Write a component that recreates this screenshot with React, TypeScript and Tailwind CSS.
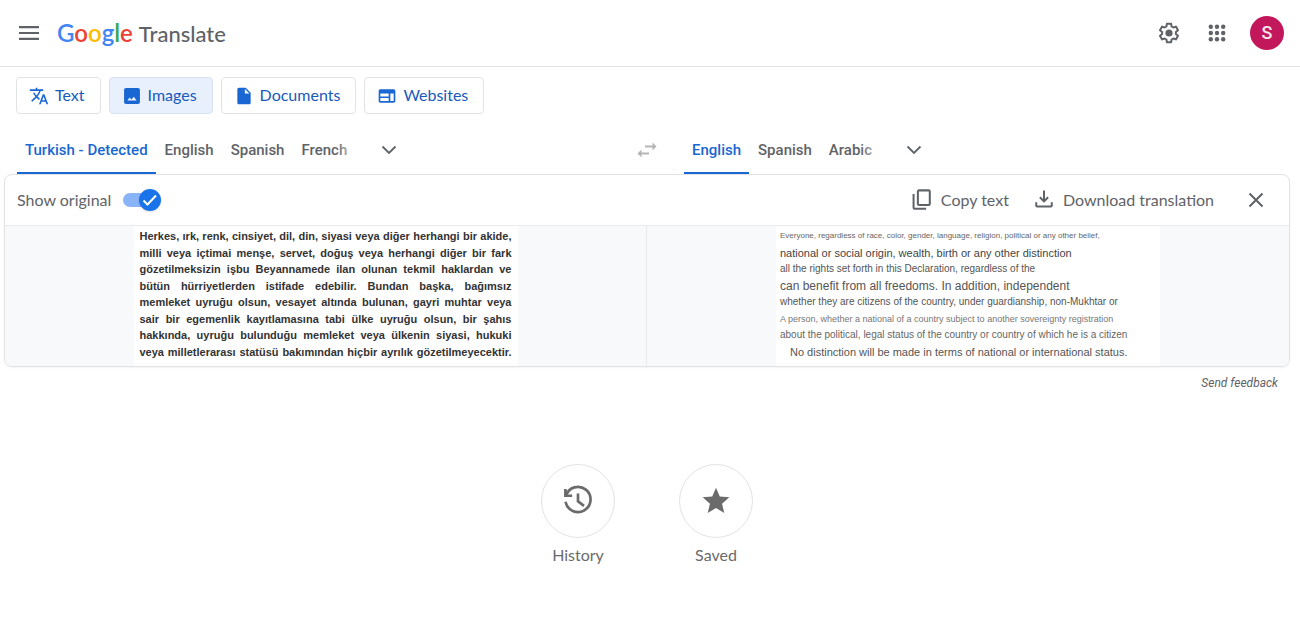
import React, { useState } from "react";

type IconProps = { className?: string };

const MenuIcon = () => (
  <svg className="h-6 w-6" viewBox="0 0 24 24" fill="currentColor" aria-hidden="true">
    <path d="M2 5h20v2.200H2zM2 10.900h20v2.200H2zM2 16.800h20V19H2z" />
  </svg>
);

const TranslateIcon = ({ className }: IconProps) => (
  <svg className={className} viewBox="0 0 24 24" fill="currentColor" aria-hidden="true">
    <path d="M12.870 15.070l-2.540-2.510.030-.030c1.740-1.940 2.980-4.170 3.710-6.530H17V4h-7V2H8v2H1v1.990h11.170C11.500 7.920 10.440 9.750 9 11.350 8.070 10.320 7.300 9.190 6.690 8h-2c.730 1.630 1.730 3.170 2.980 4.560l-5.090 5.020L4 19l5-5 3.110 3.110.760-2.040zM18.500 10h-2L12 22h2l1.120-3h4.750L21 22h2l-4.500-12zm-2.620 7l1.620-4.330L19.120 17h-3.240z" />
  </svg>
);

const ImageIcon = ({ className }: IconProps) => (
  <svg className={className} viewBox="0 0 24 24" fill="currentColor" aria-hidden="true">
    <path d="M19 2.500H5c-1.400 0-2.500.9-2.500 2v15c0 1.100 1.100 2 2.500 2h14c1.400 0 2.500-.9 2.500-2v-15c0-1.100-1.100-2-2.500-2zM17.500 17.500h-11l2.600-3.700 2.100 2.300 3-3.300 3.300 4.700z" />
  </svg>
);

const FileIcon = ({ className }: IconProps) => (
  <svg className={className} viewBox="0 0 24 24" fill="currentColor" aria-hidden="true">
    <path d="M6 2c-1.100 0-2 .9-2 2v16c0 1.100.9 2 2 2h12c1.100 0 2-.9 2-2V8l-6-6H6zm7 7V3.500L18.500 9H13z" />
  </svg>
);

const WebIcon = ({ className }: IconProps) => (
  <svg className={className} viewBox="0 0 24 24" fill="currentColor" aria-hidden="true">
    <path d="M20 4H4c-1.100 0-2 .9-2 2v12c0 1.100.9 2 2 2h16c1.100 0 2-.9 2-2V6c0-1.100-.9-2-2-2zm-6 14H4v-3.500h10V18zm0-5.500H4V9h10v3.500zm6 5.500h-4V9h4v9z" />
  </svg>
);

const GearIcon = () => (
  <svg className="h-6 w-6" viewBox="0 0 24 24" aria-hidden="true">
    <path
      d="M9.900 2.800h4.200l.5 2.700 1.700 1 2.600-.9 2.100 3.600-2.100 1.800v2l2.100 1.800-2.100 3.600-2.600-.9-1.700 1-.5 2.700H9.900l-.5-2.700-1.700-1-2.600.9L3 14.800 5.100 13v-2L3 9.200l2.100-3.600 2.600.9 1.700-1z"
      fill="none"
      stroke="currentColor"
      strokeWidth="2"
      strokeLinejoin="round"
    />
    <circle cx="12" cy="12" r="3.600" fill="currentColor" />
  </svg>
);

const AppsIcon = () => (
  <svg className="h-6 w-6" viewBox="0 0 24 24" fill="currentColor" aria-hidden="true">
    {[5.8, 12, 18.2].map((y) =>
      [5.8, 12, 18.2].map((x) => <circle key={`${x}-${y}`} cx={x} cy={y} r="2.200" />)
    )}
  </svg>
);

const ChevronIcon = () => (
  <svg className="h-6 w-6" viewBox="0 0 24 24" fill="none" stroke="currentColor" strokeWidth="1.800" aria-hidden="true">
    <path d="M5.500 8.500l6.500 6.500 6.500-6.500" />
  </svg>
);

const SwapIcon = () => (
  <svg className="h-6 w-6" viewBox="0 0 24 24" fill="currentColor" aria-hidden="true">
    <path d="M21.500 8.500l-4-4v3H10v2h7.500v3zM2.500 15.500l4-4v3H14v2H6.500v3z" />
  </svg>
);

const CopyIcon = () => (
  <svg className="h-[22px] w-[22px]" viewBox="0 0 24 24" fill="none" stroke="currentColor" strokeWidth="2.200" aria-hidden="true">
    <rect x="7.500" y="1.500" width="13" height="16" rx="1.200" />
    <path d="M2.800 5.500V20.500a1 1 0 0 0 1 1H16.500" />
  </svg>
);

const DownloadIcon = () => (
  <svg className="h-[22px] w-[22px]" viewBox="0 0 24 24" fill="none" stroke="currentColor" strokeWidth="2.200" aria-hidden="true">
    <path d="M12 1.500v12M7.500 9l4.500 4.500L16.500 9M3.500 14.500V18a1 1 0 0 0 1 1h15a1 1 0 0 0 1-1v-3.500" />
  </svg>
);

const CloseIcon = () => (
  <svg className="h-6 w-6" viewBox="0 0 24 24" fill="none" stroke="currentColor" strokeWidth="2" aria-hidden="true">
    <path d="M5.500 5.500l13 13M18.500 5.500l-13 13" />
  </svg>
);

const HistoryIcon = () => (
  <svg className="h-9 w-9" viewBox="0 0 24 24" fill="none" stroke="currentColor" strokeWidth="1.800" aria-hidden="true">
    <path d="M3.600 4v4.500h4.500M4 8.300A8.400 8.400 0 1 1 3.700 12.500M12 7v5.200l4 3" />
  </svg>
);

const StarIcon = () => (
  <svg className="h-8 w-8" viewBox="0 0 24 24" fill="currentColor" aria-hidden="true">
    <path d="M12 17.270L18.180 21l-1.640-7.030L22 9.240l-7.190-.610L12 2 9.190 8.630 2 9.240l5.460 4.730L5.820 21z" />
  </svg>
);

const modes = [
  { name: "Text", Icon: TranslateIcon },
  { name: "Images", Icon: ImageIcon },
  { name: "Documents", Icon: FileIcon },
  { name: "Websites", Icon: WebIcon },
];

const sourceLines = [
  "Herkes, ırk, renk, cinsiyet, dil, din, siyasi veya diğer herhangi bir akide,",
  "milli veya içtimai menşe, servet, doğuş veya herhangi diğer bir fark",
  "gözetilmeksizin işbu Beyannamede ilan olunan tekmil haklardan ve",
  "bütün hürriyetlerden istifade edebilir. Bundan başka, bağımsız",
  "memleket uyruğu olsun, vesayet altında bulunan, gayri muhtar veya",
  "sair bir egemenlik kayıtlamasına tabi ülke uyruğu olsun, bir şahıs",
  "hakkında, uyruğu bulunduğu memleket veya ülkenin siyasi, hukuki",
  "veya milletlerarası statüsü bakımından hiçbir ayrılık gözetilmeyecektir.",
];

const translatedLines = [
  { text: "Everyone, regardless of race, color, gender, language, religion, political or any other belief,", style: "text-[8px] text-[#666]" },
  { text: "national or social origin, wealth, birth or any other distinction", style: "text-[11px] text-[#444]" },
  { text: "all the rights set forth in this Declaration, regardless of the", style: "text-[10px] text-[#555]" },
  { text: "can benefit from all freedoms. In addition, independent", style: "text-[12px] text-[#555]" },
  { text: "whether they are citizens of the country, under guardianship, non-Mukhtar or", style: "text-[10px] text-[#555]" },
  { text: "A person, whether a national of a country subject to another sovereignty registration", style: "text-[9px] text-[#777]" },
  { text: "about the political, legal status of the country or country of which he is a citizen", style: "text-[10px] text-[#666]" },
  { text: "No distinction will be made in terms of national or international status.", style: "pl-2.5 text-[11px] text-[#555]" },
];

function LanguageTabs({ label, languages }: { label: string; languages: string[] }) {
  const [active, setActive] = useState(languages[0]);
  return (
    <div className="flex min-w-0 flex-1 items-stretch">
      <div role="tablist" aria-label={label} className="relative flex gap-px">
        {languages.map((language) => (
          <button
            key={language}
            role="tab"
            aria-selected={language === active}
            onClick={() => setActive(language)}
            className={
              language === active
                ? "border-b-2 border-[#1967d2] px-2 pt-1 text-[#1967d2]"
                : "border-b-2 border-transparent px-2 pt-1"
            }
          >
            {language}
          </button>
        ))}
        <span className="pointer-events-none absolute inset-y-0 right-0 w-5 bg-linear-to-r from-white/0 to-white/70" />
      </div>
      <button aria-label={`More ${label}`} className="ml-2.5 flex w-12 items-center justify-center pt-0.5">
        <ChevronIcon />
      </button>
    </div>
  );
}

export default function App() {
  const [mode, setMode] = useState("Images");
  const [showOriginal, setShowOriginal] = useState(true);

  return (
    <div className="min-h-screen bg-white font-['Lato',sans-serif] text-[#5f6368]">
      <header className="flex h-[67px] items-center justify-between border-b border-[#e2e3e5] pr-4 pl-[17px]">
        <div className="flex items-center gap-4">
          <button aria-label="Main menu">
            <MenuIcon />
          </button>
          <a href="#" className="flex items-baseline gap-1.5 leading-8">
            <span className="text-[24px] font-semibold">
              <span className="text-[#4285f4]">G</span>
              <span className="text-[#ea4335]">o</span>
              <span className="text-[#fbbc04]">o</span>
              <span className="text-[#4285f4]">g</span>
              <span className="text-[#34a853]">l</span>
              <span className="text-[#ea4335]">e</span>
            </span>
            <span className="text-[22px] font-medium">Translate</span>
          </a>
        </div>
        <div className="flex items-center gap-6">
          <button aria-label="Settings">
            <GearIcon />
          </button>
          <button aria-label="Google apps">
            <AppsIcon />
          </button>
          <button
            aria-label="Account"
            className="-ml-[3px] h-[34px] w-[34px] rounded-full bg-[#c2185b] font-['Roboto',sans-serif] text-lg font-medium text-white/90"
          >
            S
          </button>
        </div>
      </header>

      <main className="mr-2.5 ml-1">
        <nav aria-label="Translation types" className="flex gap-2 pt-2.5 pl-3">
          {modes.map(({ name, Icon }) => (
            <button
              key={name}
              aria-pressed={name === mode}
              onClick={() => setMode(name)}
              className={
                name === mode
                  ? "flex h-[37px] items-center gap-1.5 rounded border border-[#d9e2f1] bg-[#e8f0fe] pr-[15px] pl-3 text-[#185abc]"
                  : "flex h-[37px] items-center gap-1.5 rounded border border-[#e2e3e5] pr-[15px] pl-3 text-[#185abc]"
              }
            >
              <Icon className="h-5 w-5 text-[#1967d2]" />
              <span className="pb-0.5 text-[16px]">{name}</span>
            </button>
          ))}
        </nav>

        <div className="flex h-[60px] px-[13px] pt-2.5 font-['Roboto',sans-serif] text-[15px] font-medium">
          <LanguageTabs label="source languages" languages={["Turkish - Detected", "English", "Spanish", "French"]} />
          <button aria-label="Swap languages" disabled className="mx-[25px] pt-0.5 text-[#b4b6b8]">
            <SwapIcon />
          </button>
          <LanguageTabs label="target languages" languages={["English", "Spanish", "Arabic"]} />
        </div>

        <section className="overflow-hidden rounded-lg border border-[#e2e3e5] shadow-xs">
          <div className="flex h-[50px] items-center justify-between pr-[21px] pl-3 text-[16px]">
            <label className="flex items-center gap-3">
              Show original
              <span className="relative flex h-6 w-[38px] items-center">
                <input
                  type="checkbox"
                  role="switch"
                  checked={showOriginal}
                  onChange={(event) => setShowOriginal(event.target.checked)}
                  className="h-3.5 w-9 appearance-none rounded-full bg-[#bdc1c6] checked:bg-[#8ab4f8]"
                />
                <span
                  className={
                    showOriginal
                      ? "pointer-events-none absolute right-0 flex h-[22px] w-[22px] items-center justify-center rounded-full bg-[#1a73e8] text-white shadow-sm"
                      : "pointer-events-none absolute left-0 flex h-[22px] w-[22px] items-center justify-center rounded-full bg-white text-transparent shadow-sm"
                  }
                >
                  <svg className="h-4 w-4" viewBox="0 0 16 16" fill="none" stroke="currentColor" strokeWidth="2" aria-hidden="true">
                    <path d="M1.500 8.500l4 4L14 3.500" />
                  </svg>
                </span>
              </span>
            </label>
            <div className="flex items-center">
              <button className="flex items-center gap-2">
                <CopyIcon />
                Copy text
              </button>
              <button className="ml-6 flex items-center gap-2">
                <DownloadIcon />
                Download translation
              </button>
              <button aria-label="Clear image" className="ml-[30px]">
                <CloseIcon />
              </button>
            </div>
          </div>

          <div className="grid grid-cols-2 border-t border-[#e8eaed] bg-[#f8f9fa] font-['Liberation_Sans',sans-serif]">
            <div className="flex justify-center border-r border-[#e8eaed]">
              <div className="grid min-h-[140px] w-96 auto-rows-fr bg-white px-1.5 pt-0.5 pb-1.5 text-[11px] font-bold text-[#333]">
                {sourceLines.map((line) => (
                  <p key={line} className="leading-4 whitespace-nowrap [text-align-last:justify]">
                    {line}
                  </p>
                ))}
              </div>
            </div>
            <div className="flex justify-center">
              <div className="grid min-h-[140px] w-96 auto-rows-fr bg-white px-1 pt-0.5 pb-1.5">
                {translatedLines.map(({ text, style }) => (
                  <p key={text} className="flex items-center">
                    <span className={`leading-4 whitespace-nowrap ${style}`}>{text}</span>
                  </p>
                ))}
              </div>
            </div>
          </div>
        </section>

        <div className="flex justify-end pt-2 pr-3">
          <a href="#" className="font-['Roboto',sans-serif] text-[12px] leading-4 italic">
            Send feedback
          </a>
        </div>

        <div className="flex justify-center gap-16 pt-[73px] text-[#6b6b6b]">
          <button className="flex w-[74px] flex-col items-center gap-[5px] text-[16px]">
            <span className="flex h-[74px] w-[74px] items-center justify-center rounded-full border border-[#e2e3e5]">
              <HistoryIcon />
            </span>
            History
          </button>
          <button className="flex w-[74px] flex-col items-center gap-[5px] text-[16px]">
            <span className="flex h-[74px] w-[74px] items-center justify-center rounded-full border border-[#e2e3e5]">
              <StarIcon />
            </span>
            Saved
          </button>
        </div>
      </main>
    </div>
  );
}
